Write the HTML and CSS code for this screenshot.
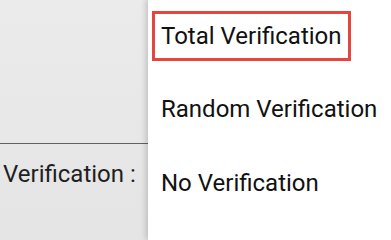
FILE: index.html
```html
<!DOCTYPE html>
<html>
<head>
<meta charset="utf-8">
<link rel="stylesheet" href="styles.css">
</head>
<body>
<div class="screen">
  <div class="backdrop">
    <div class="spacer"></div>
    <div class="divider"></div>
    <div class="label">Verification :</div>
  </div>
  <div class="menu">
    <div class="item first"><span class="highlight">Total Verification</span></div>
    <div class="item">Random Verification</div>
    <div class="item">No Verification</div>
  </div>
</div>
</body>
</html>
```
FILE: styles.css
```css
html, body {
  margin: 0;
  padding: 0;
  background: #e6e6e6;
  font-family: Roboto, "Noto Sans", sans-serif;
}
.screen {
  display: flex;
  width: 391px;
  height: 100vh;
  min-height: 215px;
  overflow: hidden;
}
.backdrop {
  width: 148px;
  flex: none;
  display: flex;
  flex-direction: column;
  background: linear-gradient(to bottom, #ebebeb, #e5e5e5 215px);
}
.spacer {
  height: 143px;
  flex: none;
}
.divider {
  height: 1px;
  flex: none;
  background: #626262;
}
.label {
  padding: 16px 0 0 3px;
  font-size: 24px;
  line-height: 28px;
  color: #1f1f1f;
  white-space: nowrap;
}
.menu {
  flex: 1;
  background: #fff;
  box-shadow: -2px 0 6px rgba(0,0,0,0.18);
  display: flex;
  flex-direction: column;
  margin-top: -1px;
}
.item {
  height: 73.5px;
  flex: none;
  display: flex;
  align-items: center;
  padding-left: 13px;
  font-size: 24px;
  color: #111;
  white-space: nowrap;
}
.item.first {
  padding-left: 4px;
}
.highlight {
  display: inline-flex;
  align-items: center;
  height: 44px;
  border: 3px solid #e5453d;
  padding: 0 6px;
}
```
